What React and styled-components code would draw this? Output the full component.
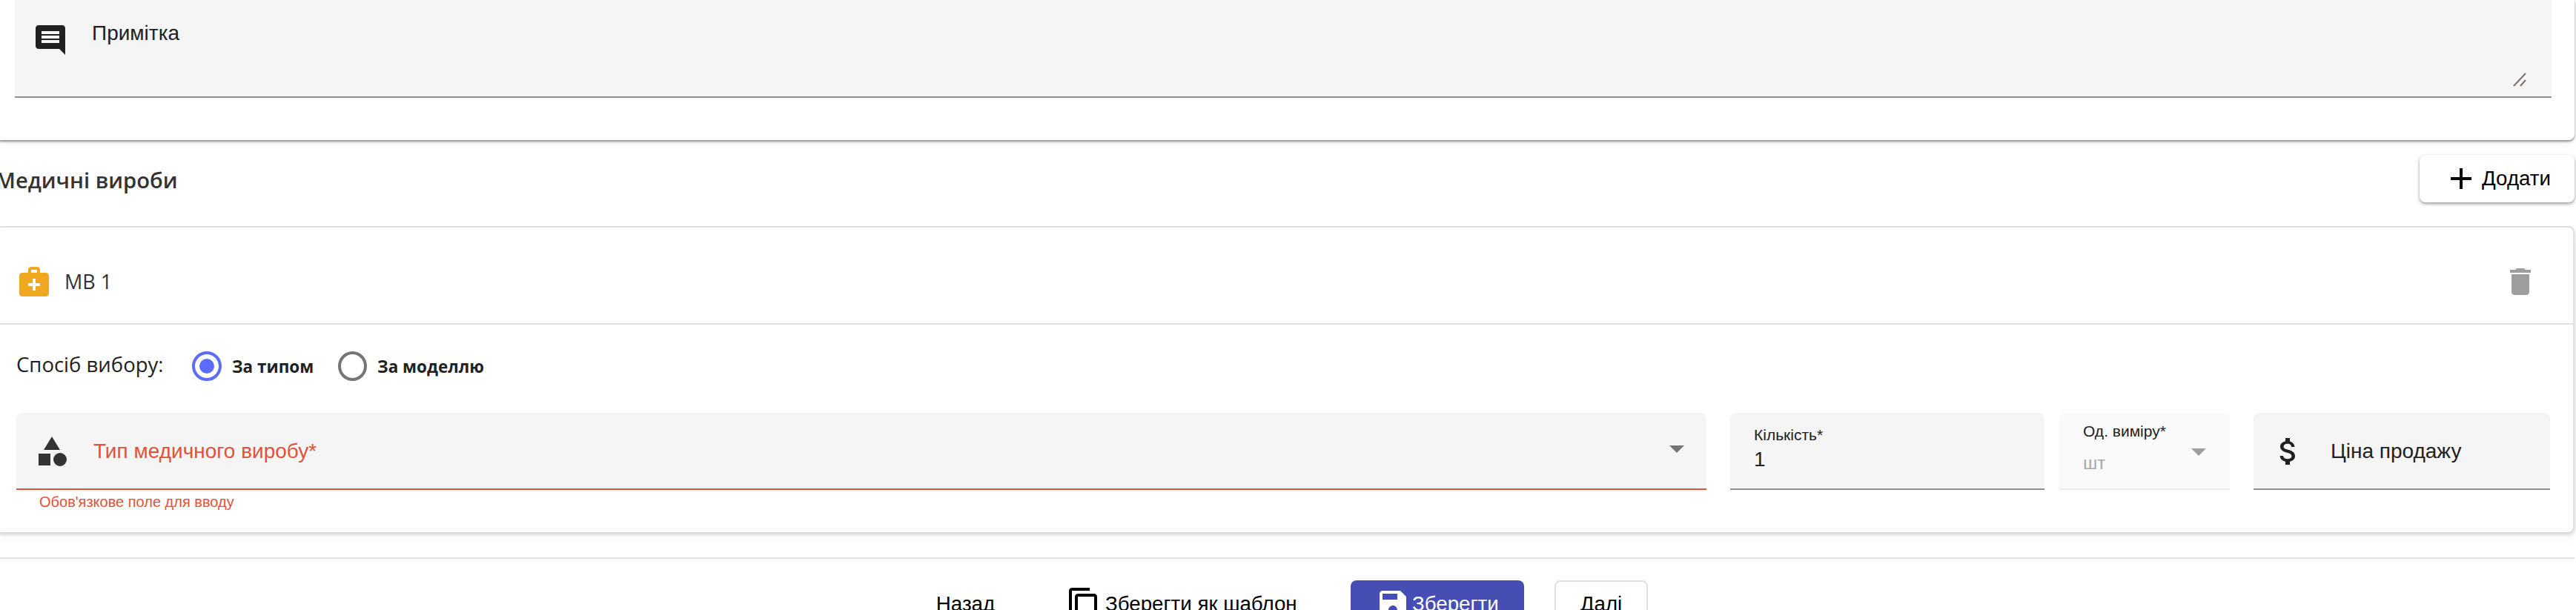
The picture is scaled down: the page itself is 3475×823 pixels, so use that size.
import React from 'react'
import styled, { createGlobalStyle } from 'styled-components'

const paths = {
    comment: 'M21.99 4c0-1.1-.89-2-1.99-2H4c-1.1 0-2 .9-2 2v12c0 1.1.9 2 2 2h14l4 4-.01-18zM18 14H6v-2h12v2zm0-3H6V9h12v2zm0-3H6V6h12v2z',
    add: 'M19 13h-6v6h-2v-6H5v-2h6V5h2v6h6v2z',
    bag: 'M20 6h-4V4c0-1.1-.9-2-2-2h-4c-1.1 0-2 .9-2 2v2H4c-1.1 0-2 .9-2 2v12c0 1.1.9 2 2 2h16c1.1 0 2-.9 2-2V8c0-1.1-.9-2-2-2zM10 4h4v2h-4V4zm6 11h-3v3h-2v-3H8v-2h3v-3h2v3h3v2z',
    trash: 'M6 19c0 1.1.9 2 2 2h8c1.1 0 2-.9 2-2V7H6v12zM19 4h-3.5l-1-1h-5l-1 1H5v2h14V4z',
    category: 'M12 2l-5.5 9h11zM3 13.5h8v8H3zM17.5 13a4.5 4.5 0 1 0 0 9 4.5 4.5 0 0 0 0-9z',
    arrow: 'M7 10l5 5 5-5z',
    money: 'M11.8 10.9c-2.27-.59-3-1.2-3-2.15 0-1.09 1.01-1.85 2.7-1.85 1.78 0 2.44.85 2.5 2.1h2.21c-.07-1.72-1.12-3.3-3.21-3.81V3h-3v2.16c-1.94.42-3.5 1.68-3.5 3.61 0 2.31 1.91 3.46 4.7 4.13 2.5.6 3 1.48 3 2.41 0 .69-.49 1.79-2.7 1.79-2.06 0-2.87-.92-2.98-2.1h-2.2c.12 2.19 1.76 3.42 3.68 3.83V21h3v-2.15c1.95-.37 3.5-1.5 3.5-3.55 0-2.84-2.43-3.81-4.7-4.4z',
    copy: 'M16 1H4c-1.1 0-2 .9-2 2v14h2V3h12V1zm3 4H8c-1.1 0-2 .9-2 2v14c0 1.1.9 2 2 2h11c1.1 0 2-.9 2-2V7c0-1.1-.9-2-2-2zm0 16H8V7h11v14z',
    save: 'M17 3H5c-1.11 0-2 .9-2 2v14c0 1.1.89 2 2 2h14c1.1 0 2-.9 2-2V7l-4-4zm-5 16c-1.66 0-3-1.34-3-3s1.34-3 3-3 3 1.34 3 3-1.34 3-3 3zm3-10H5V5h10v4z',
}

const Global = createGlobalStyle`
    html, body {
        margin: 0;
        padding: 0;
        background: #fff;
        overflow: hidden;
    }
    * {
        box-sizing: border-box;
    }
`
//STYLE//
const Page = styled.div`
    width: 3475px;
    height: 823px;
    overflow: hidden;
    display: flex;
    flex-direction: column;
    font-family: "Liberation Sans", Arial, sans-serif;
    color: #212121;
    background: #fff;
`
const Content = styled.div`
    margin-left: -6px;
    margin-right: 2px;
    display: flex;
    flex-direction: column;
`
const NoteCard = styled.section`
    height: 189px;
    padding: 0 31px 0 26px;
    background: #fff;
    border-radius: 0 0 8px 8px;
    box-shadow: 0 2px 3px rgba(0, 0, 0, 0.42), 0 4px 8px rgba(0, 0, 0, 0.06);
`
const NoteField = styled.div`
    position: relative;
    height: 132px;
    padding: 30px 0 0 24px;
    display: flex;
    background: #f5f5f5;
    border-bottom: 2px solid #8f8f8f;
`
const NoteLabel = styled.span`
    margin-left: 32px;
    font-size: 28px;
    line-height: 30px;
`
const Grip = styled.svg`
    position: absolute;
    right: 33px;
    bottom: 12px;
    width: 20px;
    height: 20px;
`
const SectionHeader = styled.div`
    height: 116px;
    padding-bottom: 8px;
    display: flex;
    align-items: center;
    justify-content: space-between;
`
const Heading = styled.h2`
    margin: 0;
    font-family: "Open Sans", sans-serif;
    font-size: 29.2px;
    font-weight: 600;
    color: #333;
`
const AddButton = styled.button`
    width: 209px;
    height: 64px;
    margin-top: -4px;
    padding: 0 32px 0 32px;
    display: flex;
    align-items: center;
    justify-content: flex-end;
    gap: 4px;
    border: 0;
    border-radius: 8px;
    background: #fff;
    color: #000;
    font-family: inherit;
    font-size: 27.7px;
    box-shadow: 0 2px 4px rgba(0, 0, 0, 0.4);
`
const ProductCard = styled.section`
    height: 413px;
    border: 2px solid #e0e0e0;
    border-width: 2px 2px 0 0;
    border-radius: 8px;
    background: #fff;
    box-shadow: 0 3px 4px rgba(0, 0, 0, 0.14), 0 6px 12px rgba(0, 0, 0, 0.05);
`
const ProductHead = styled.div`
    height: 131px;
    padding: 16px 47px 0 28px;
    display: flex;
    align-items: center;
    gap: 17px;
    border-bottom: 2px solid #e0e0e0;
`
const ProductTitle = styled.span`
    flex: 1;
    font-family: "Open Sans", sans-serif;
    font-size: 27px;
    font-weight: 500;
    color: #333;
`
const ChoiceRow = styled.div`
    height: 119px;
    padding: 0 0 7px 28px;
    display: flex;
    align-items: center;
`
const ChoiceLabel = styled.span`
    width: 237px;
    margin-top: -6px;
    font-family: "Open Sans", sans-serif;
    font-size: 27.5px;
    font-weight: 500;
`
const Choice = styled.label`
    width: 197px;
    display: flex;
    align-items: center;
    gap: 14px;
    white-space: nowrap;
    font-family: "Open Sans", sans-serif;
    font-size: 22.5px;
    font-weight: 700;
`
const Radio = styled.span`
    width: 40px;
    height: 40px;
    display: flex;
    align-items: center;
    justify-content: center;
    border-radius: 50%;
    border: 4px solid ${(p) => (p.$on ? '#5b6cff' : '#757575')};

    &::after {
        content: '';
        width: 20px;
        height: 20px;
        border-radius: 50%;
        background: ${(p) => (p.$on ? '#5b6cff' : 'transparent')};
    }
`
const FieldRow = styled.div`
    padding-left: 28px;
    display: flex;
    align-items: flex-start;
`
const FieldColumn = styled.div`
    display: flex;
    flex-direction: column;
`
const Field = styled.div`
    position: relative;
    width: ${(p) => p.$w}px;
    height: 104px;
    margin-left: ${(p) => p.$gap || 0}px;
    display: flex;
    align-items: center;
    padding-top: 2px;
    padding-left: ${(p) => p.$pad || 0}px;
    border-radius: 8px 8px 0 0;
    background: ${(p) => (p.$disabled ? '#fafafa' : '#f5f5f5')};
    border-bottom: 2px solid ${(p) => (p.$error ? '#e0533a' : p.$disabled ? '#ececec' : '#8f8f8f')};
`
const FieldLabel = styled.span`
    margin-left: ${(p) => p.$indent || 0}px;
    font-size: 28px;
    color: ${(p) => (p.$error ? '#e0533a' : '#212121')};
`
const Stacked = styled.div`
    display: flex;
    flex-direction: column;
    padding-bottom: 8px;
`
const SmallLabel = styled.span`
    font-size: 21px;
    line-height: 26px;
`
const Value = styled.span`
    margin-top: ${(p) => p.$top || 4}px;
    font-size: ${(p) => p.$size || 28}px;
    line-height: 32px;
    color: ${(p) => p.$color || '#212121'};
`
const FieldArrow = styled.span`
    position: absolute;
    right: ${(p) => p.$right}px;
    top: ${(p) => p.$top}px;
    display: flex;
`
const Helper = styled.span`
    margin: 4px 0 0 31px;
    font-size: 20px;
    line-height: 24px;
    color: #e0533a;
`
const Footer = styled.footer`
    margin-top: 34px;
    padding: 29px 0 0 1233px;
    display: flex;
    border-top: 2px solid #e0e0e0;
`
const FooterButton = styled.button`
    height: 64px;
    flex: none;
    width: ${(p) => (p.$w ? `${p.$w}px` : 'auto')};
    margin-left: ${(p) => p.$ml || 0}px;
    padding: 0 ${(p) => p.$pad || 0}px;
    display: flex;
    align-items: center;
    gap: ${(p) => p.$gap || 2}px;
    white-space: nowrap;
    border-radius: 8px;
    border: ${(p) => (p.$outlined ? '2px solid #e0e0e0' : '0')};
    background: ${(p) => (p.$primary ? '#474eb3' : 'transparent')};
    color: ${(p) => (p.$primary ? '#fff' : '#000')};
    font-family: inherit;
    font-size: 27.7px;
`
const Centered = styled(FooterButton)`
    justify-content: center;
`
//STYLE//
const Icon = ({ name, size = 48, color = 'currentColor' }) => (
    <svg width={size} height={size} viewBox="0 0 24 24" fill={color} style={{ flex: 'none' }}>
        <path d={paths[name]} />
    </svg>
)

export default function App() {
    return (
        <Page>
            <Global />
            <Content>
                <NoteCard>
                    <NoteField>
                        <Icon name="comment" color="#212121" />
                        <NoteLabel>Примітка</NoteLabel>
                        <Grip viewBox="0 0 20 20">
                            <path d="M2 18L18 1M11 18L18 10" stroke="#7d6f6a" strokeWidth="2" fill="none" />
                        </Grip>
                    </NoteField>
                </NoteCard>
                <SectionHeader>
                    <Heading>Медичні вироби</Heading>
                    <AddButton>
                        <Icon name="add" />
                        Додати
                    </AddButton>
                </SectionHeader>
                <ProductCard>
                    <ProductHead>
                        <Icon name="bag" color="#efa81f" />
                        <ProductTitle>МВ 1</ProductTitle>
                        <Icon name="trash" color="#9e9e9e" />
                    </ProductHead>
                    <ChoiceRow>
                        <ChoiceLabel>Спосіб вибору:</ChoiceLabel>
                        <Choice>
                            <Radio $on />
                            За типом
                        </Choice>
                        <Choice>
                            <Radio />
                            За моделлю
                        </Choice>
                    </ChoiceRow>
                    <FieldRow>
                        <FieldColumn>
                            <Field $w={2280} $pad={24} $error>
                                <Icon name="category" color="#333" />
                                <FieldLabel $error $indent={32}>Тип медичного виробу*</FieldLabel>
                                <FieldArrow $right={16} $top={24}>
                                    <Icon name="arrow" color="#757575" />
                                </FieldArrow>
                            </Field>
                            <Helper>Обов'язкове поле для вводу</Helper>
                        </FieldColumn>
                        <Field $w={424} $gap={32} $pad={32}>
                            <Stacked>
                                <SmallLabel>Кількість*</SmallLabel>
                                <Value>1</Value>
                            </Stacked>
                        </Field>
                        <Field $w={230} $gap={20} $pad={32} $disabled>
                            <Stacked>
                                <SmallLabel>Од. виміру*</SmallLabel>
                                <Value $size={24} $color="#a8a8a8" $top={14}>шт</Value>
                            </Stacked>
                            <FieldArrow $right={18} $top={28}>
                                <Icon name="arrow" color="#9e9e9e" />
                            </FieldArrow>
                        </Field>
                        <Field $w={400} $gap={32} $pad={23}>
                            <Icon name="money" color="#212121" />
                            <FieldLabel $indent={33}>Ціна продажу</FieldLabel>
                        </Field>
                    </FieldRow>
                </ProductCard>
                <Footer>
                    <Centered $w={151}>Назад</Centered>
                    <FooterButton $ml={28} $w={372} $pad={32} $gap={5}>
                        <Icon name="copy" />
                        Зберегти як шаблон
                    </FooterButton>
                    <FooterButton $ml={44} $w={234} $pad={33} $primary>
                        <Icon name="save" />
                        Зберегти
                    </FooterButton>
                    <Centered $ml={41} $w={126} $outlined>Далі</Centered>
                </Footer>
            </Content>
        </Page>
    )
}
